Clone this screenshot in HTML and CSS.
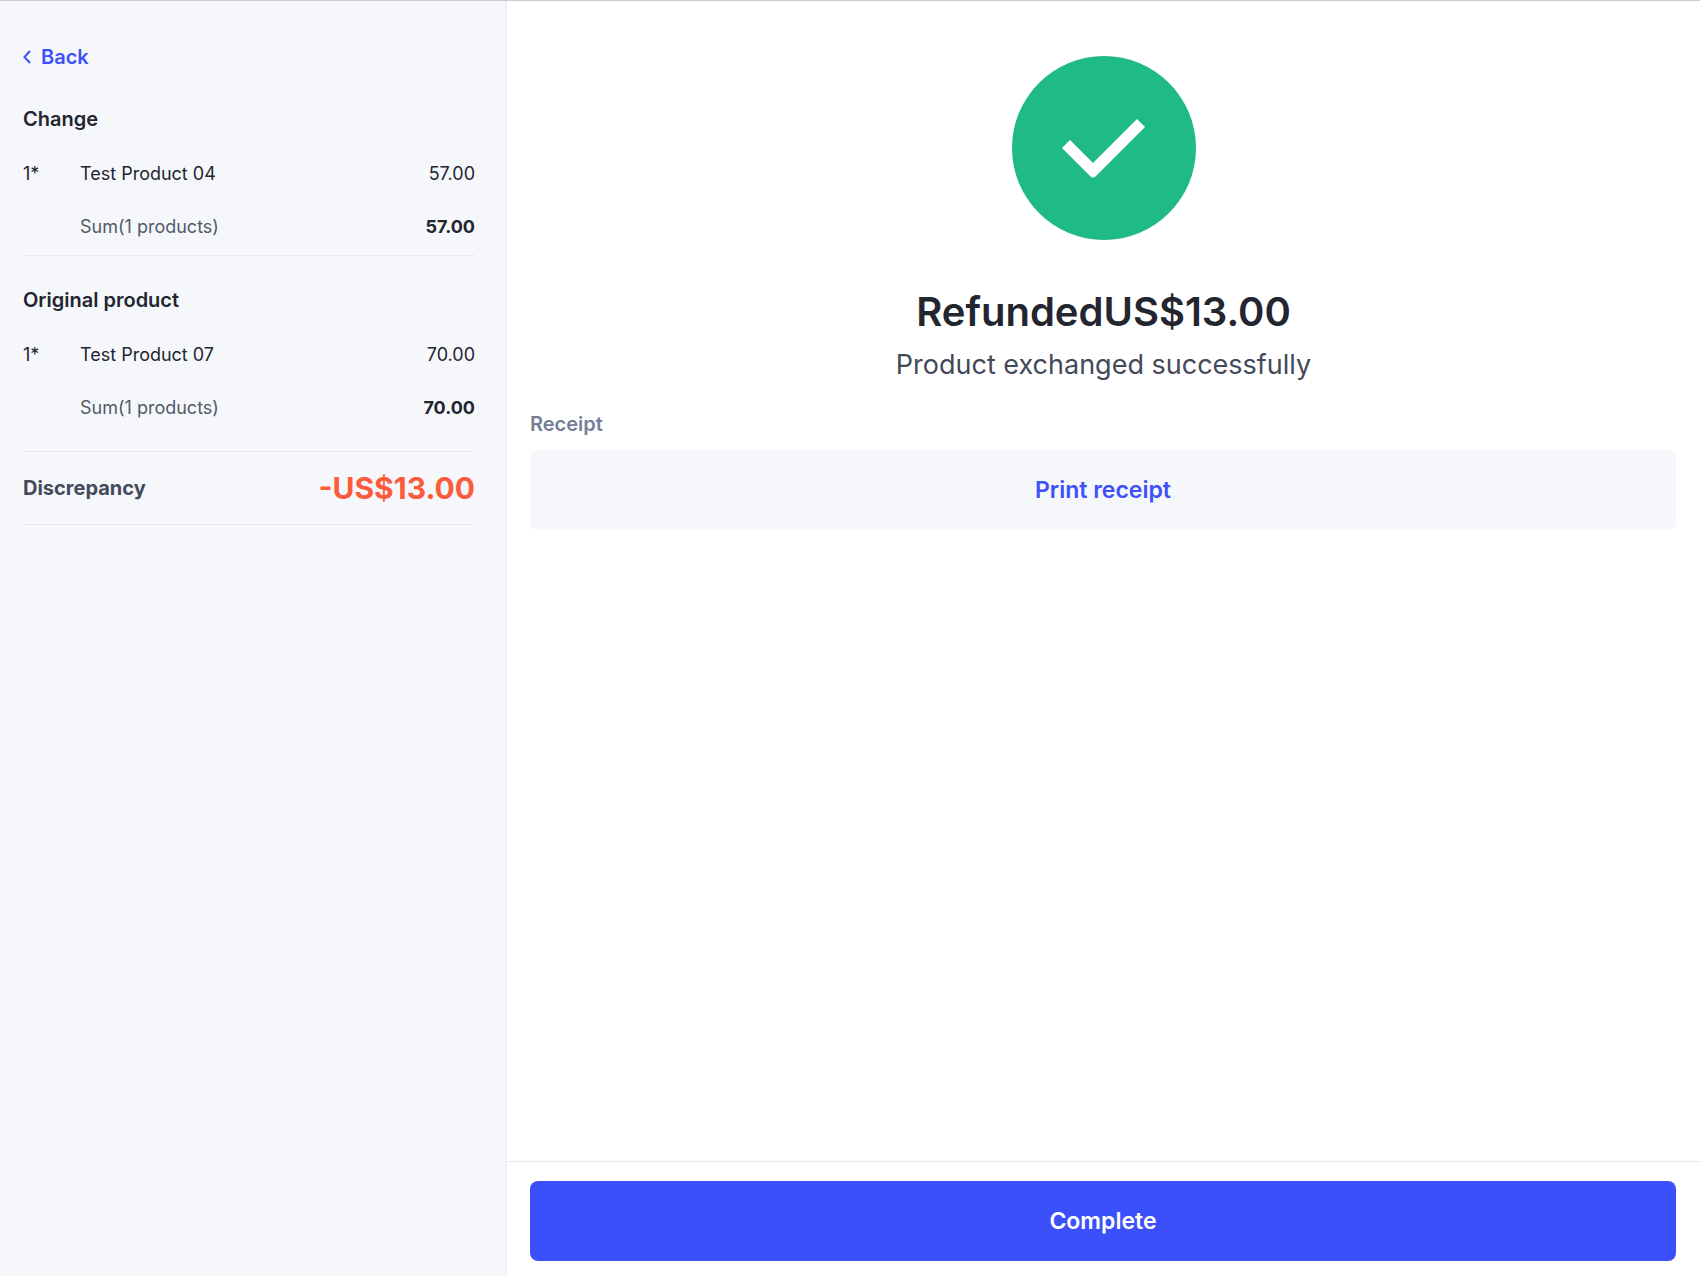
FILE: index.html
```html
<!DOCTYPE html>
<html lang="en">
<head>
    <meta charset="UTF-8">
    <meta name="viewport" content="width=device-width, initial-scale=1.0">
    <title>Exchange - Refunded</title>
    <link rel="stylesheet" href="styles.css">
</head>
<body>

<aside class="sidebar">
    <a class="back" href="#">
        <svg width="8" height="14" viewBox="0 0 8 14" aria-hidden="true">
            <path d="M7 1L1.5 7L7 13" fill="none" stroke="currentColor" stroke-width="2"/>
        </svg>
        Back
    </a>

    <section class="group">
        <h2>Change</h2>
        <table>
            <tr>
                <td class="qty">1*</td>
                <td>Test Product 04</td>
                <td class="price">57.00</td>
            </tr>
            <tr class="sum">
                <td></td>
                <td>Sum(1 products)</td>
                <td class="price">57.00</td>
            </tr>
        </table>
    </section>

    <section class="group original">
        <h2>Original product</h2>
        <table>
            <tr>
                <td class="qty">1*</td>
                <td>Test Product 07</td>
                <td class="price">70.00</td>
            </tr>
            <tr class="sum">
                <td></td>
                <td>Sum(1 products)</td>
                <td class="price">70.00</td>
            </tr>
        </table>
    </section>

    <div class="discrepancy">
        <span>Discrepancy</span>
        <strong>-US$13.00</strong>
    </div>
</aside>

<main class="main">
    <div class="result">
        <svg class="check" viewBox="0 0 184 184" aria-hidden="true">
            <circle cx="92" cy="92" r="92" fill="#1fba87"/>
            <path d="M50 92L58 84L81 107L125 63L133 71L84 120Q81 123 78 120Z" fill="#fff"/>
        </svg>
        <h1>RefundedUS$13.00</h1>
        <p>Product exchanged successfully</p>
    </div>

    <div class="receipt">
        <h3>Receipt</h3>
        <button type="button" class="btn btn-light">Print receipt</button>
    </div>

    <div class="footer">
        <button type="button" class="btn btn-primary">Complete</button>
    </div>
</main>

</body>
</html>
```
FILE: styles.css
```css
* {
    box-sizing: border-box;
}

body {
    font-family: Inter, 'Liberation Sans', sans-serif;
    margin: 0;
    min-height: 100vh;
    display: flex;
    background: #fff;
    color: #23252f;
    border-top: 1px solid #c9cad0;
}

h1, h2, h3, p {
    margin: 0;
}

/* Sidebar */
.sidebar {
    flex: 0 0 507px;
    padding: 44px 30px 24px 23px;
    background: #f5f7fb;
    border-right: 2px solid #edf0f6;
}

.back {
    display: inline-flex;
    align-items: center;
    gap: 10px;
    height: 24px;
    color: #3d50fa;
    font-size: 20px;
    font-weight: 600;
    text-decoration: none;
}

.group {
    margin-top: 32px;
    padding-bottom: 17px;
    border-bottom: 1px solid #e8eaf0;
}

.back + .group {
    margin-top: 38px;
}

.group.original {
    padding-bottom: 32px;
}

.group h2 {
    margin-bottom: 32px;
    font-size: 20px;
    line-height: 24px;
    font-weight: 600;
}

.group table {
    width: 100%;
    border-collapse: collapse;
    font-size: 18px;
    line-height: 22px;
}

.group td {
    padding: 0;
}

.group .qty {
    width: 57px;
}

.group .price {
    text-align: right;
}

.group .sum td {
    padding-top: 31px;
    color: #545a69;
}

.group .sum .price {
    color: #23252f;
    font-weight: 700;
}

.discrepancy {
    display: flex;
    align-items: center;
    justify-content: space-between;
    height: 73px;
    border-bottom: 1px solid #e8eaf0;
    color: #434959;
    font-size: 20px;
    font-weight: 700;
}

.discrepancy strong {
    color: #fc5c3c;
    font-size: 30px;
    font-weight: 700;
}

/* Main */
.main {
    flex: 1;
    display: flex;
    flex-direction: column;
}

.result {
    display: flex;
    flex-direction: column;
    align-items: center;
    padding-top: 55px;
    text-align: center;
}

.check {
    width: 184px;
    height: 184px;
}

.result h1 {
    margin-top: 48px;
    font-size: 40px;
    line-height: 48px;
    font-weight: 600;
}

.result p {
    margin-top: 11px;
    color: #434959;
    font-size: 27px;
    line-height: 36px;
}

.receipt {
    flex: 1;
    padding: 29px 24px 24px 23px;
}

.receipt h3 {
    margin-bottom: 14px;
    color: #757e96;
    font-size: 20px;
    line-height: 24px;
    font-weight: 600;
}

.btn {
    display: block;
    width: 100%;
    height: 80px;
    border: 0;
    border-radius: 8px;
    font-family: inherit;
    font-size: 23px;
    font-weight: 600;
    cursor: pointer;
}

.btn-light {
    background: #f5f7fb;
    color: #3d50fa;
}

.btn-primary {
    background: #3b50fa;
    color: #fff;
}

.footer {
    padding: 19px 24px 15px 23px;
    border-top: 1px solid #e6e9f1;
}
```
